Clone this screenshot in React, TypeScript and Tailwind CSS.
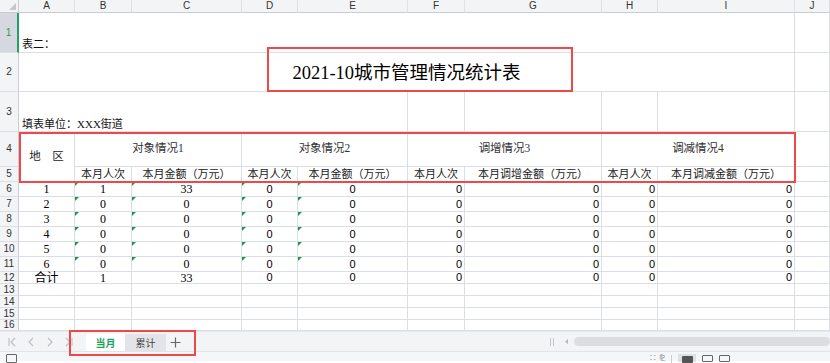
import React from "react";

const serif = "font-['Liberation_Serif','Noto_Sans_CJK_SC',serif]";
const sans = "font-['Liberation_Sans','Noto_Sans_CJK_SC',sans-serif]";
const line = "border-r border-b border-[#dcdee5]";
const rowHead =
  "bg-[#f3f4f6] border-r border-b border-r-[#c9ccd3] border-b-[#dcdee5] text-[10px] text-[#333] flex items-center justify-center font-['Liberation_Sans',sans-serif] leading-none";

const letters = ["A", "B", "C", "D", "E", "F", "G", "H", "I", "J"];

const data: string[][] = [
  ["1", "1", "33", "0", "0", "0", "0", "0", "0"],
  ["2", "0", "0", "0", "0", "0", "0", "0", "0"],
  ["3", "0", "0", "0", "0", "0", "0", "0", "0"],
  ["4", "0", "0", "0", "0", "0", "0", "0", "0"],
  ["5", "0", "0", "0", "0", "0", "0", "0", "0"],
  ["6", "0", "0", "0", "0", "0", "0", "0", "0"],
  ["合计", "1", "33", "0", "0", "0", "0", "0", "0"],
];

function Tri() {
  return (
    <span className="absolute left-0 top-0 w-0 h-0 border-t-[4px] border-r-[4px] border-t-[#1a9a3c] border-r-transparent" />
  );
}

function DataRow({ n, vals, flag }: { n: number; vals: string[]; flag: boolean }) {
  return (
    <>
      <div className={rowHead}>{n}</div>
      <div className={`${line} ${serif} text-[12px] text-black flex items-center justify-center leading-none`}>{vals[0]}</div>
      <div className={`${line} ${serif} relative text-[12px] text-black flex items-center justify-center leading-none`}>
        {flag && <Tri />}
        {vals[1]}
      </div>
      <div className={`${line} ${serif} relative text-[12px] text-black flex items-center justify-center leading-none`}>
        {flag && <Tri />}
        {vals[2]}
      </div>
      <div className={`${line} ${sans} relative text-[11px] text-black flex items-center justify-center leading-none`}>
        {flag && <Tri />}
        {vals[3]}
      </div>
      <div className={`${line} ${sans} relative text-[11px] text-black flex items-center justify-center leading-none`}>
        {flag && <Tri />}
        {vals[4]}
      </div>
      <div className={`${line} ${sans} text-[11px] text-black flex items-center justify-end pr-[2px] leading-none`}>{vals[5]}</div>
      <div className={`${line} ${sans} text-[11px] text-black flex items-center justify-end pr-[2px] leading-none`}>{vals[6]}</div>
      <div className={`${line} ${sans} text-[11px] text-black flex items-center justify-end pr-[2px] leading-none`}>{vals[7]}</div>
      <div className={`${line} ${sans} text-[11px] text-black flex items-center justify-end pr-[2px] leading-none`}>{vals[8]}</div>
      <div className={line} />
    </>
  );
}

function EmptyRow({ n }: { n: number }) {
  return (
    <>
      <div className={rowHead}>{n}</div>
      {letters.map((l) => (
        <div key={l} className={line} />
      ))}
    </>
  );
}

export default function App() {
  return (
    <div className="relative w-[830px] h-[363px] overflow-hidden bg-white">
      <div className="grid grid-cols-[19px_56px_57px_110px_56px_110px_57px_137px_56px_137px_35px] grid-rows-[13px_40px_39px_40px_35px_15px_15px_15px_15px_15px_15px_15px_12px_12px_12px_12px]">
        {/* column headers */}
        <div className="relative bg-[#f3f4f6] border-r border-b border-[#c9ccd3]">
          <svg className="absolute right-[2px] bottom-[2px]" width="7" height="7" viewBox="0 0 7 7">
            <path d="M7 0 L7 7 L0 7 Z" fill="#c3c6cc" />
          </svg>
        </div>
        {letters.map((l) => (
          <div
            key={l}
            className="bg-[#f3f4f6] border-r border-b border-r-[#dfe1e6] border-b-[#c9ccd3] text-[10px] text-[#333] flex items-center justify-center font-['Liberation_Sans',sans-serif] leading-none"
          >
            {l}
          </div>
        ))}

        {/* row 1 */}
        <div className="bg-[#d5d8de] border-b border-b-[#dcdee5] border-r-2 border-r-[#21a366] text-[10px] text-[#1f9d55] flex items-center justify-center font-['Liberation_Sans',sans-serif] leading-none">
          1
        </div>
        <div className={`${line} col-span-9 flex items-end pl-[3px] pb-[1px] ${serif} text-[11px] text-[#111] leading-[14px]`}>表二：</div>
        <div className={line} />

        {/* row 2 */}
        <div className={rowHead}>2</div>
        <div className={`${line} col-span-9 flex items-center justify-center pt-[3px] ${serif} text-[18.5px] text-black leading-none`}>
          2021-10城市管理情况统计表
        </div>
        <div className={line} />

        {/* row 3 */}
        <div className={rowHead}>3</div>
        <div className={`${line} col-span-5 flex items-end pl-[3px] pb-[0px] ${serif} text-[11px] text-[#111] leading-[14px]`}>
          填表单位：XXX街道
        </div>
        <div className={line} />
        <div className={line} />
        <div className={line} />
        <div className={line} />
        <div className={line} />

        {/* row 4 */}
        <div className={rowHead}>4</div>
        <div className={`${line} row-span-2 flex items-center justify-center ${serif} text-[11.5px] text-[#222] leading-none`}>
          地　区
        </div>
        <div className={`${line} col-span-2 flex items-center justify-center ${serif} text-[11.5px] text-[#333] leading-none`}>
          对象情况1
        </div>
        <div className={`${line} col-span-2 flex items-center justify-center ${serif} text-[11.5px] text-[#333] leading-none`}>
          对象情况2
        </div>
        <div className={`${line} col-span-2 flex items-center justify-center ${serif} text-[11.5px] text-[#333] leading-none`}>
          调增情况3
        </div>
        <div className={`${line} col-span-2 flex items-center justify-center ${serif} text-[11.5px] text-[#333] leading-none`}>
          调减情况4
        </div>
        <div className={line} />

        {/* row 5 */}
        <div className={rowHead}>5</div>
        {[
          "本月人次",
          "本月金额（万元）",
          "本月人次",
          "本月金额（万元）",
          "本月人次",
          "本月调增金额（万元）",
          "本月人次",
          "本月调减金额（万元）",
        ].map((t, i) => (
          <div key={i} className={`${line} flex items-end justify-center pb-[1px] ${serif} text-[11px] text-[#222] leading-none whitespace-nowrap overflow-hidden`}>
            {t}
          </div>
        ))}
        <div className={line} />

        {data.map((vals, i) => (
          <DataRow key={i} n={6 + i} vals={vals} flag={i < 6} />
        ))}
        <EmptyRow n={13} />
        <EmptyRow n={14} />
        <EmptyRow n={15} />
        <EmptyRow n={16} />
      </div>

      {/* sheet tab bar */}
      <div className="h-[20px] bg-[#f3f4f6] border-t border-[#e6e7eb] flex items-end">
        <div className="w-[86px] h-full flex items-center pl-[7px] gap-[9px] text-[#b9bcc3]">
          <svg width="10" height="10" viewBox="0 0 10 10" fill="none" stroke="currentColor" strokeWidth="1.1">
            <path d="M2 1 V9 M8 1 L4 5 L8 9" />
          </svg>
          <svg width="10" height="10" viewBox="0 0 10 10" fill="none" stroke="currentColor" strokeWidth="1.1">
            <path d="M7 1 L3 5 L7 9" />
          </svg>
          <svg width="10" height="10" viewBox="0 0 10 10" fill="none" stroke="currentColor" strokeWidth="1.1">
            <path d="M3 1 L7 5 L3 9" />
          </svg>
          <svg width="10" height="10" viewBox="0 0 10 10" fill="none" stroke="currentColor" strokeWidth="1.1">
            <path d="M2 1 L6 5 L2 9 M8 1 V9" />
          </svg>
        </div>
        <div className="w-[39px] h-[17px] bg-white flex items-center justify-center text-[10px] font-bold text-[#1fa35c] font-['Noto_Sans_CJK_SC',sans-serif] leading-none">
          当月
        </div>
        <div className="w-[41px] h-[17px] bg-[#e3e4e8] flex items-center justify-center text-[10px] text-[#444] font-['Noto_Sans_CJK_SC',sans-serif] leading-none">
          累计
        </div>
        <div className="w-[18px] h-[17px] flex items-center justify-center text-[#666]">
          <svg width="11" height="11" viewBox="0 0 11 11" stroke="currentColor" strokeWidth="1.2">
            <path d="M5.5 0.5 V10.5 M0.5 5.5 H10.5" />
          </svg>
        </div>
        <div className="flex-1" />
        <div className="w-[282px] h-full flex items-center">
          <div className="w-[10px] h-[8px] flex gap-[2px] ml-[2px]">
            <span className="w-[1px] h-full bg-[#c4c7cd]" />
            <span className="w-[1px] h-full bg-[#c4c7cd]" />
          </div>
          <svg className="ml-[5px]" width="4" height="5" viewBox="0 0 4 5">
            <path d="M3 0 L0 2.5 L3 5 Z" fill="#b5b8be" />
          </svg>
          <div className="ml-[5px] flex-1 h-[9px] rounded-full bg-[#dcdde1]" />
        </div>
      </div>

      {/* status bar */}
      <div className="h-[10px] bg-[#f5f6f8] border-t border-[#e3e4e8] flex items-start">
        <div className="ml-[6px] mt-[2px] w-[11px] h-[9px] border border-[#666] rounded-[1px]" />
        <div className="flex-1" />
        <div className="mr-[100px] flex items-start gap-[6px] mt-[2px]">
          <span className="text-[9px] leading-none text-[#888] font-['Liberation_Sans',sans-serif]">∷ ⅊</span>
          <span className="w-[1px] h-[8px] bg-[#ccc] mt-[1px]" />
          <div className="w-[18px] h-[8px] bg-[#dfe1e5] flex justify-center pt-[2px]">
            <span className="w-[11px] h-[7px] bg-[#555] rounded-[1px]" />
          </div>
          <span className="w-[11px] h-[7px] border border-[#666] rounded-[1px] mt-[1px]" />
          <span className="w-[11px] h-[7px] border border-[#666] rounded-[1px] mt-[1px]" />
        </div>
      </div>

      {/* red annotation boxes */}
      <div className="absolute left-[267px] top-[47px] w-[306px] h-[45px] border-2 border-[#f04848]" />
      <div className="absolute left-[19px] top-[132px] w-[777px] h-[51px] border-2 border-[#f04848]" />
      <div className="absolute left-[69px] top-[330px] w-[127px] h-[26px] border-2 border-[#f04848]" />
    </div>
  );
}
